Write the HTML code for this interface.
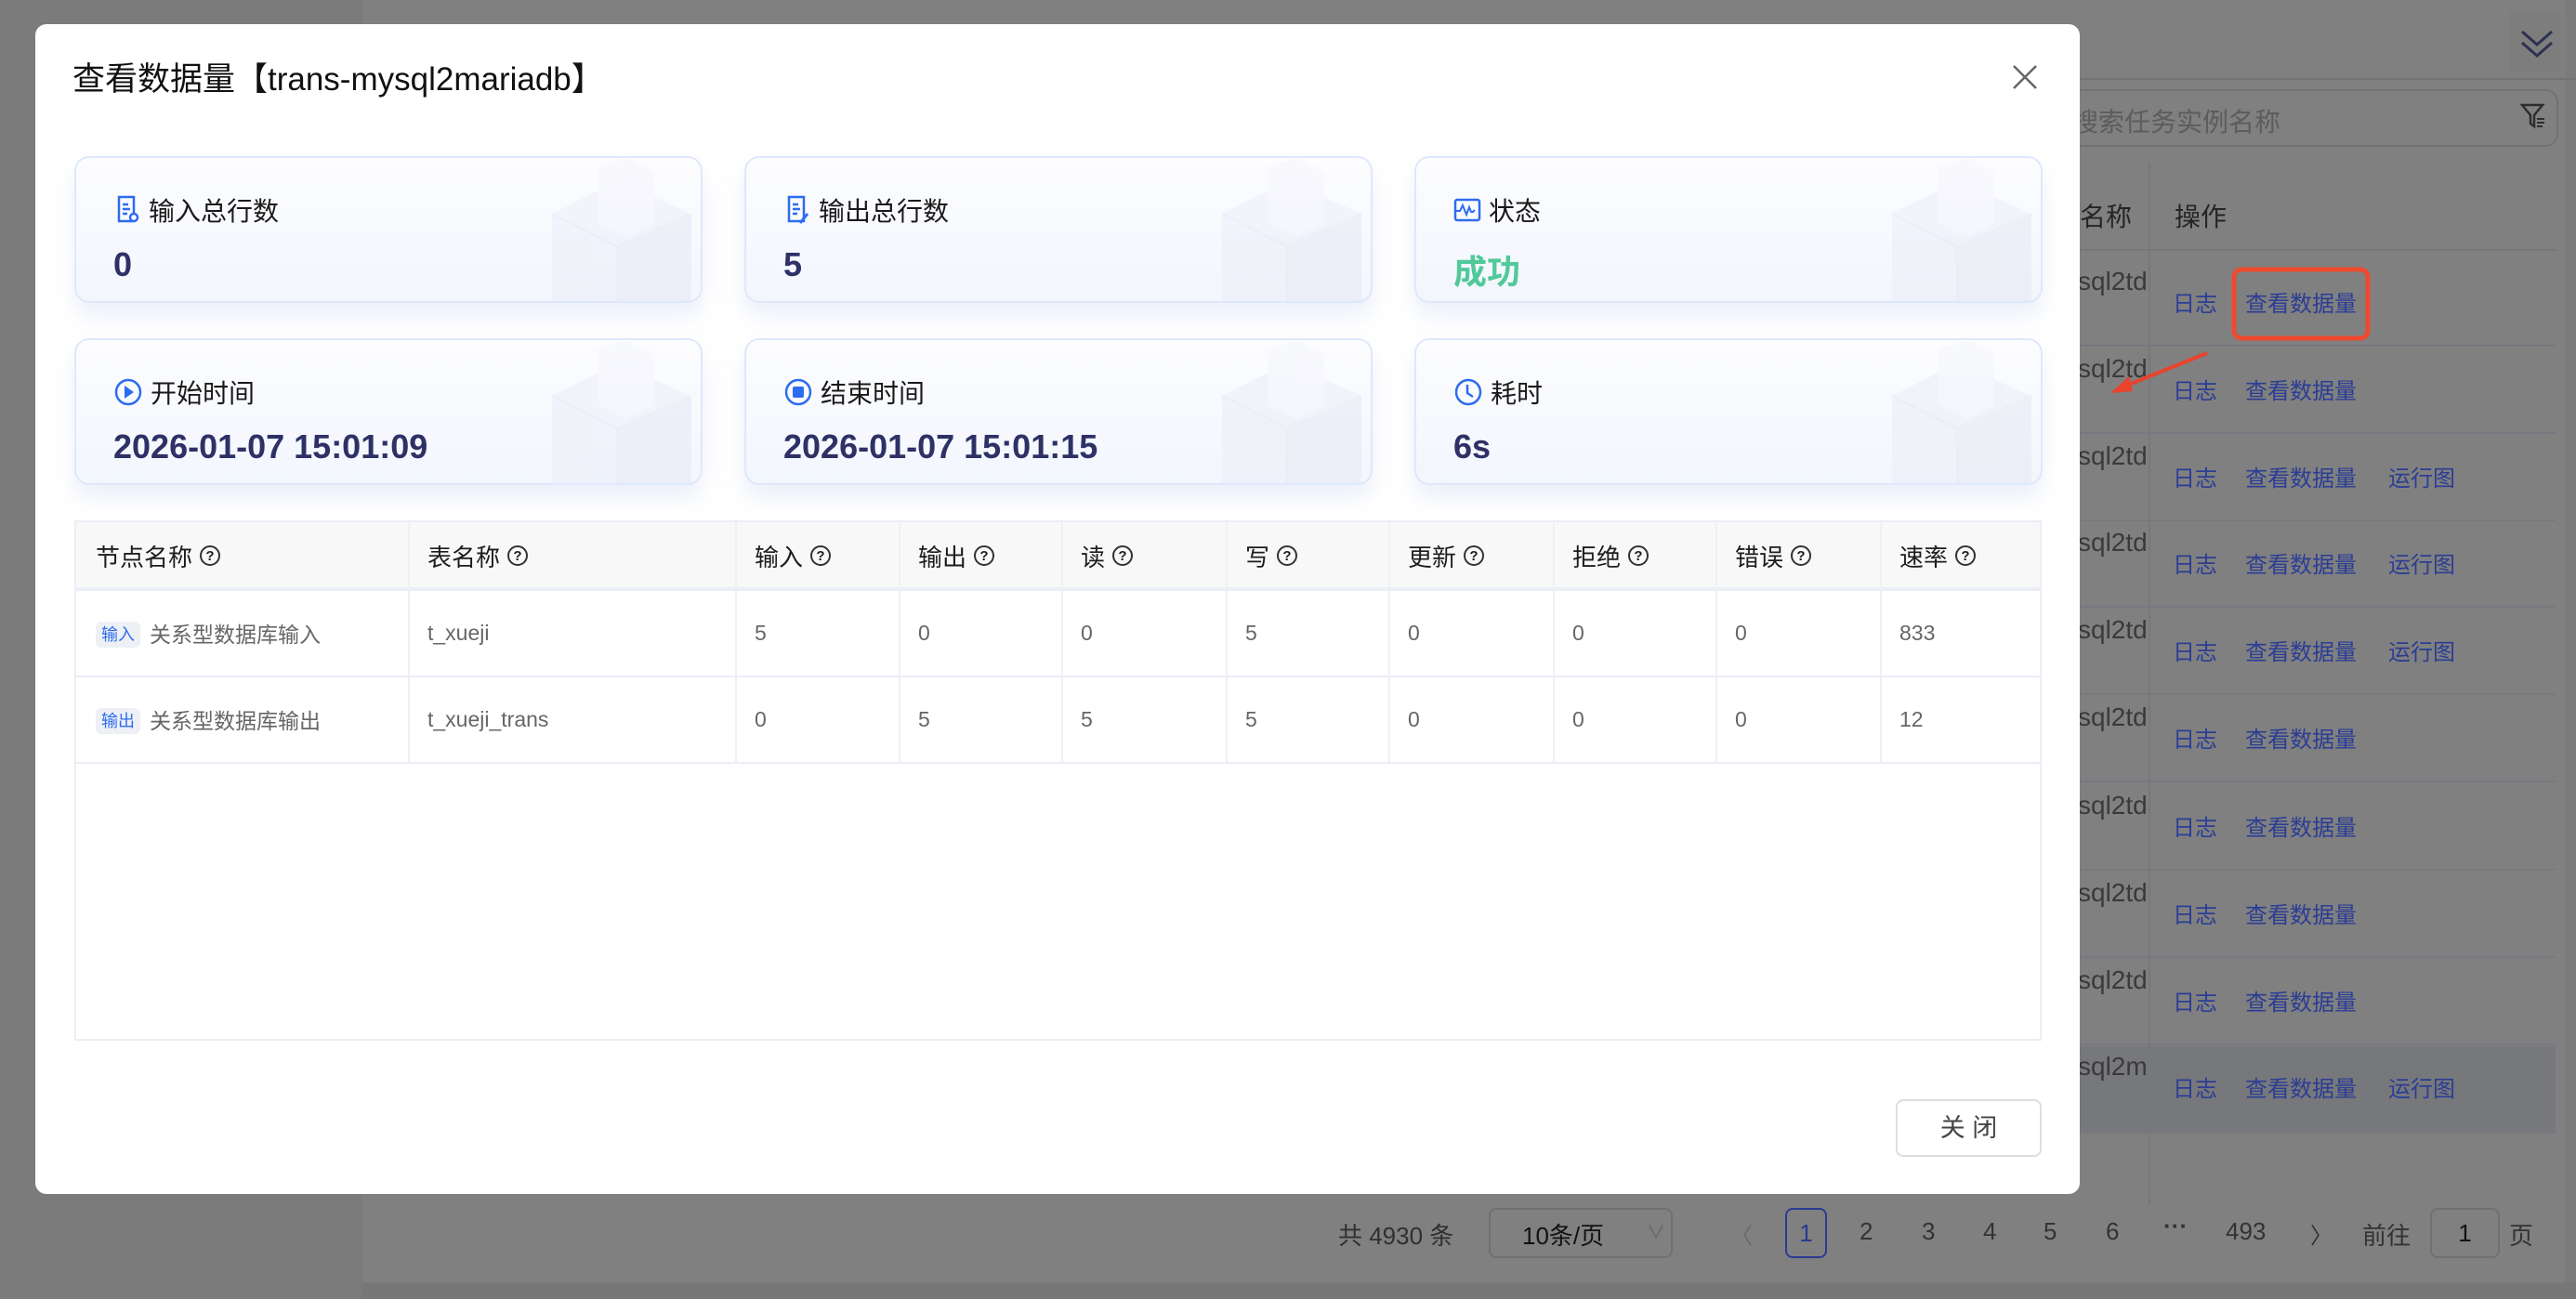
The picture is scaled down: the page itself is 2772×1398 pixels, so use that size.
<!DOCTYPE html>
<html><head><meta charset="utf-8"><style>
*{margin:0;padding:0;box-sizing:border-box}
body{width:2772px;height:1398px;overflow:hidden;background:#7b7b7b;font-family:"Liberation Sans","Noto Sans CJK SC",sans-serif;position:relative}
.a{position:absolute}
.panel{left:390px;top:0;width:2370px;height:1380px;background:#808080}
.bl{color:#2b3d94;font-size:24px}
.gr{color:#3a3a3a;font-size:28px}
.dlg{left:38px;top:26px;width:2200px;height:1259px;background:#fff;border-radius:12px}
.card{width:676px;height:158px;border:2px solid #dfe8fa;border-radius:16px;background:linear-gradient(180deg,#fdfdff,#f2f6fd);box-shadow:0 14px 22px rgba(220,228,245,.55);overflow:hidden}
.lbl{left:40px;top:36px;font-size:28px;color:#1a1a1a;display:flex;align-items:center;gap:8px}
.val{left:40px;top:94px;font-size:36px;color:#2e3166;font-weight:bold}
.tbl{left:80px;top:560px;width:2117px;height:560px;border:2px solid #ebeef5}
.th{top:0;height:72px;background:#f8f8f9;border-bottom:2px solid #ebeef5}
.hc{top:0;height:72px;display:flex;align-items:center;font-size:26px;color:#1d1d1d;gap:8px}
.q{width:22px;height:22px;border:2px solid #333;border-radius:50%;font-size:15px;display:inline-flex;align-items:center;justify-content:center;font-weight:bold}
.vl{top:0;width:2px;height:260px;background:#eef0f5}
.hl{left:0;width:2113px;height:2px;background:#ebeef5}
.td{font-size:23px;color:#666}
.tag{background:#eef0f5;color:#2d6cf0;font-size:18px;padding:4px 6px;border-radius:6px;margin-right:10px;vertical-align:2px}
.pg{top:1310px;font-size:26px;color:#333}
</style></head><body>
<div class="a panel"></div>
<div class="a" style="left:390px;top:1380px;width:2382px;height:18px;background:#777"></div>
<div class="a" style="left:2700px;top:12px;width:56px;height:66px;background:#7d7d7d"></div>
<svg class="a" style="left:2710px;top:30px" width="40" height="36" viewBox="0 0 40 36"><path d="M4 4 L20 18 L36 4 M4 16 L20 30 L36 16" fill="none" stroke="#2e3250" stroke-width="3"/></svg>
<div class="a" style="left:2100px;top:84px;width:2660px;height:2px;background:#747474"></div>
<div class="a" style="left:2100px;top:96px;width:653px;height:62px;border:2px solid #727272;border-radius:14px"></div>
<div class="a" style="left:2230px;top:110px;font-size:28px;color:#5c5c5c">搜索任务实例名称</div>
<svg class="a" style="left:2712px;top:110px" width="28" height="30" viewBox="0 0 28 30"><path d="M2 3 H24 L15 14 V26 L11 23 V14 Z" fill="none" stroke="#2e2e2e" stroke-width="2.5"/><path d="M18 18h8M18 22h8M18 26h6" stroke="#2e2e2e" stroke-width="2"/></svg>
<div class="a" style="left:2312px;top:176px;width:2px;height:1120px;background:#787878"></div>
<div class="a gr" style="left:2340px;top:212px;color:#252525">操作</div>
<div class="a" style="left:2160px;top:268px;width:590px;height:2px;background:#767676"></div>
<div class="a" style="left:2238px;top:212px;font-size:28px;color:#252525">名称</div>
<div class="a" style="left:2238px;top:1126px;width:512px;height:94px;background:#77787c"></div>
<div id="rows"></div>
<svg class="a" style="left:2400px;top:286px" width="152" height="82"><rect x="4" y="4" width="144" height="74" rx="8" fill="none" stroke="#ee4a2f" stroke-width="5"/></svg>
<svg class="a" style="left:2265px;top:375px" width="120" height="60"><path d="M110 5 L18 42" stroke="#e8432c" stroke-width="4"/><path d="M6 48 L26 30 L30 46 Z" fill="#e8432c"/></svg>
<div class="a pg" style="left:1440px;color:#303030">共 4930 条</div>
<div class="a" style="left:1602px;top:1300px;width:198px;height:54px;border:2px solid #707070;border-radius:8px"></div>
<div class="a" style="left:1638px;top:1310px;font-size:26px;color:#111">10条/页</div>
<div class="a" style="left:1772px;top:1310px;font-size:20px;color:#666">∨</div>
<div class="a" style="left:1862px;top:1310px;font-size:24px;color:#6a6a6a">〈</div>
<div class="a" style="left:1921px;top:1300px;width:45px;height:54px;border:2px solid #2a3a94;border-radius:8px;color:#2a3a94;font-size:26px;text-align:center;line-height:50px">1</div>
<div class="a pg" style="left:2001px">2</div>
<div class="a pg" style="left:2068px">3</div>
<div class="a pg" style="left:2134px">4</div>
<div class="a pg" style="left:2199px">5</div>
<div class="a pg" style="left:2266px">6</div>
<div class="a pg" style="left:2328px;top:1304px;font-weight:bold">···</div>
<div class="a pg" style="left:2395px">493</div>
<div class="a pg" style="left:2486px;font-size:24px">〉</div>
<div class="a pg" style="left:2542px">前往</div>
<div class="a" style="left:2615px;top:1300px;width:75px;height:54px;border:2px solid #707070;border-radius:8px;text-align:center;line-height:50px;font-size:26px;color:#111">1</div>
<div class="a pg" style="left:2700px">页</div>

<div class="a dlg">
 <div class="a" style="left:40px;top:31px;font-size:35px;color:#111">查看数据量【trans-mysql2mariadb】</div>
 <svg class="a" style="left:2126px;top:42px" width="30" height="30"><path d="M3 3L27 27M27 3L3 27" stroke="#666" stroke-width="2.5"/></svg>
</div>
<div id="cards"></div>
<div class="a tbl">
 <div class="a th" style="left:0;width:2113px"></div>
 <div class="a hl" style="top:72px"></div>
 <div class="a hl" style="top:165px"></div>
 <div class="a hl" style="top:258px"></div>
 <div id="tb"></div>
</div>
<div class="a" style="left:2040px;top:1183px;width:157px;height:62px;border:2px solid #dcdee2;border-radius:8px;text-align:center;line-height:58px;font-size:27px;color:#444">关 闭</div>
<script>
var rows=[184,237,290,343,396,449,503,556,609,662],three=[0,0,1,1,1,0,0,0,0,1],h='';
rows.forEach(function(y,i){var Y=Math.round(y*1.768);
h+='<div class="a gr" style="left:2236px;top:'+(Y-38)+'px">'+(i==9?'sql2m':'sql2td')+'</div>';
h+='<div class="a bl" style="left:2338px;top:'+(Y-18)+'px">日志</div><div class="a bl" style="left:2416px;top:'+(Y-18)+'px">查看数据量</div>';
if(three[i])h+='<div class="a bl" style="left:2570px;top:'+(Y-18)+'px">运行图</div>';
h+='<div class="a" style="left:2160px;top:'+(Y+46)+'px;width:590px;height:2px;background:#787880"></div>';});
document.getElementById('rows').innerHTML=h;
var ic={
doc:'<svg width="30" height="32" viewBox="0 0 30 32"><path d="M6 2h16v26H6z" fill="none" stroke="#2d6cf0" stroke-width="2.5"/><path d="M10 10h6M10 15h8M10 20h5" stroke="#2d6cf0" stroke-width="2.5"/><circle cx="22" cy="24" r="4" fill="#fff" stroke="#2d6cf0" stroke-width="2.5"/></svg>',
doc2:'<svg width="30" height="32" viewBox="0 0 30 32"><path d="M6 2h16v26H6z" fill="none" stroke="#2d6cf0" stroke-width="2.5"/><path d="M10 10h6M10 15h8M10 20h5" stroke="#2d6cf0" stroke-width="2.5"/><path d="M18 30l8-10" stroke="#2d6cf0" stroke-width="3"/></svg>',
pulse:'<svg width="30" height="30" viewBox="0 0 30 30"><rect x="2" y="4" width="26" height="22" rx="2" fill="none" stroke="#2d6cf0" stroke-width="2.5"/><path d="M3 16h4l3-6 4 10 3-8 2 5h2l2-2" fill="none" stroke="#2d6cf0" stroke-width="2"/></svg>',
play:'<svg width="32" height="32" viewBox="0 0 32 32"><circle cx="16" cy="16" r="13" fill="none" stroke="#2d6cf0" stroke-width="2.5"/><path d="M12 9l10 7-10 7z" fill="#2d6cf0"/></svg>',
stop:'<svg width="32" height="32" viewBox="0 0 32 32"><circle cx="16" cy="16" r="13" fill="none" stroke="#2d6cf0" stroke-width="2.5"/><rect x="10" y="10" width="12" height="12" rx="2" fill="#2d6cf0"/></svg>',
clock:'<svg width="32" height="32" viewBox="0 0 32 32"><circle cx="16" cy="16" r="13" fill="none" stroke="#2d6cf0" stroke-width="2.5"/><path d="M15 8v9l6 4" fill="none" stroke="#2d6cf0" stroke-width="2.5"/></svg>'};
var cube='<svg class="a" style="right:0;top:0" width="200" height="158" viewBox="0 0 200 158"><g opacity=".55"><path d="M40 60 L110 25 L190 60 L190 158 L40 158 Z" fill="#eceef7"/><path d="M40 60 L110 95 L190 60" fill="none" stroke="#e2e5f0" stroke-width="2"/><path d="M110 95 V158" stroke="#e0e3ee" stroke-width="2"/><path d="M90 10 L120 0 L150 15 L150 70 L120 85 L90 70Z" fill="#f4f5fb"/><path d="M110 95 L190 60 V158 H110Z" fill="#e6e8f2"/></g></svg>';
var cards=[[80,168,'doc','输入总行数','0'],[801,168,'doc2','输出总行数','5'],[1522,168,'pulse','状态','成功'],[80,364,'play','开始时间','2026-01-07 15:01:09'],[801,364,'stop','结束时间','2026-01-07 15:01:15'],[1522,364,'clock','耗时','6s']],c='';
cards.forEach(function(k){c+='<div class="a card" style="left:'+k[0]+'px;top:'+k[1]+'px">'+cube+'<div class="a lbl">'+ic[k[2]]+k[3]+'</div><div class="a val" style="'+(k[4]=='成功'?'color:#52c99a':'')+'">'+k[4]+'</div></div>';});
document.getElementById('cards').innerHTML=c;
var xs=[0,357,709,885,1060,1237,1412,1589,1764,1941],hd=['节点名称','表名称','输入','输出','读','写','更新','拒绝','错误','速率'],t='';
var r1=['<span class="tag">输入</span>关系型数据库输入','t_xueji','5','0','0','5','0','0','0','833'],r2=['<span class="tag">输出</span>关系型数据库输出','t_xueji_trans','0','5','5','5','0','0','0','12'];
xs.forEach(function(x,i){if(i)t+='<div class="a vl" style="left:'+x+'px"></div>';
t+='<div class="a hc" style="left:'+(x+21)+'px">'+hd[i]+'<span class="q">?</span></div>';
t+='<div class="a td" style="left:'+(x+21)+'px;top:'+(i?106:102)+'px">'+r1[i]+'</div><div class="a td" style="left:'+(x+21)+'px;top:'+(i?199:195)+'px">'+r2[i]+'</div>';});
document.getElementById('tb').innerHTML=t;
</script>
</body></html>
